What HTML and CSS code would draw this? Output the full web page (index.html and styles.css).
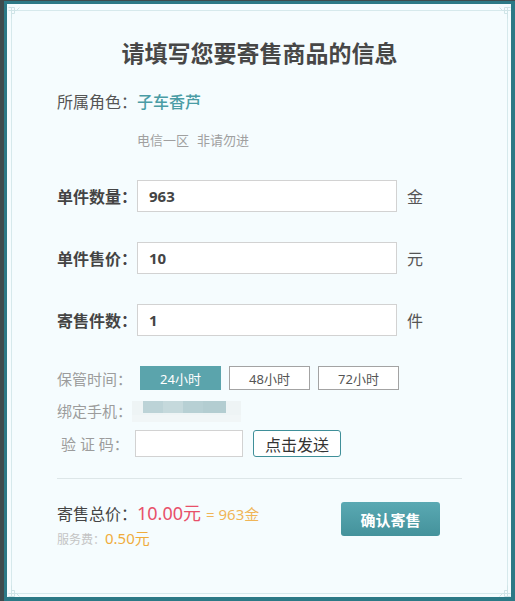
FILE: index.html
```html
<!DOCTYPE html>
<html>
<head>
  <meta charset="utf-8">
  <title>寄售商品</title>
  <link rel="stylesheet" href="styles.css">
</head>
<body>
  <div class="modal">
    <div class="frame">
      <svg class="corner corner-tl" width="12" height="12" viewBox="0 0 12 12"><path d="M11.5 0.5 L8.5 3.5 L0.5 3.5 M3.5 0.5 L3.5 11.5 M0.5 0.5 L6.5 0.5 L6.5 6.5 L3.5 6.5" fill="none" stroke="#cfe4e7"/></svg>
      <svg class="corner corner-tr" width="12" height="12" viewBox="0 0 12 12"><path d="M0.5 0.5 L3.5 3.5 L11.5 3.5 M8.5 0.5 L8.5 11.5 M11.5 0.5 L5.5 0.5 L5.5 6.5 L8.5 6.5" fill="none" stroke="#cfe4e7"/></svg>
      <svg class="corner corner-bl" width="12" height="12" viewBox="0 0 12 12"><path d="M11.5 11.5 L8.5 8.5 L0.5 8.5 M3.5 11.5 L3.5 0.5 M0.5 11.5 L6.5 11.5 L6.5 5.5 L3.5 5.5" fill="none" stroke="#cfe4e7"/></svg>
      <svg class="corner corner-br" width="12" height="12" viewBox="0 0 12 12"><path d="M0.5 11.5 L3.5 8.5 L11.5 8.5 M8.5 11.5 L8.5 0.5 M11.5 11.5 L5.5 11.5 L5.5 5.5 L8.5 5.5" fill="none" stroke="#cfe4e7"/></svg>

      <h2 class="title">请填写您要寄售商品的信息</h2>

      <div class="role-row">
        <span class="role-label">所属角色：</span>
        <span class="role-name">子车香芦</span>
      </div>
      <div class="server">电信一区<span class="server-note">非请勿进</span></div>

      <div class="field">
        <label class="field-label">单件数量：</label>
        <input class="field-input" type="text" value="963">
        <span class="unit">金</span>
      </div>
      <div class="field">
        <label class="field-label">单件售价：</label>
        <input class="field-input" type="text" value="10">
        <span class="unit">元</span>
      </div>
      <div class="field">
        <label class="field-label">寄售件数：</label>
        <input class="field-input" type="text" value="1">
        <span class="unit">件</span>
      </div>

      <div class="option-row time-row">
        <span class="sub-label">保管时间：</span>
        <div class="durations">
          <button class="dur active">24小时</button>
          <button class="dur">48小时</button>
          <button class="dur">72小时</button>
        </div>
      </div>
      <div class="option-row phone-row">
        <span class="sub-label">绑定手机：</span>
        <div class="masked"><div class="masked-core"></div></div>
      </div>
      <div class="option-row code-row">
        <span class="sub-label code-label">验 证 码：</span>
        <input class="code-input" type="text">
        <button class="send-btn">点击发送</button>
      </div>

      <hr class="divider">

      <div class="summary">
        <div class="totals">
          <div class="total-line">
            <span class="total-label">寄售总价：</span>
            <span class="total-price">10.00元</span>
            <span class="total-gold">= 963金</span>
          </div>
          <div class="fee-line">
            <span class="fee-label">服务费：</span>
            <span class="fee-value">0.50元</span>
          </div>
        </div>
        <button class="confirm-btn">确认寄售</button>
      </div>
    </div>
  </div>
</body>
</html>
```

FILE: styles.css
```css
body {
  margin: 0;
  background: #3f4b4d;
  font-family: "Noto Sans", "Noto Sans CJK SC", sans-serif;
  height: 601px;
  overflow: hidden;
}

.modal {
  box-sizing: border-box;
  width: 511px;
  height: 600px;
  margin: 1px 0 0 4px;
  border: 3px solid #2c7986;
  border-right-width: 4px;
  border-bottom-width: 4px;
  background: #f5fcfe;
  padding: 6px 3px 3px 4px;
}

.frame {
  position: relative;
  box-sizing: border-box;
  height: 584px;
  border: 1px solid #d6e9ec;
  padding: 27px 45px 0 45px;
}

/* decorative corners of the frame */
.corner {
  position: absolute;
}

.corner-tl { top: -4px; left: -4px; }
.corner-tr { top: -4px; right: -4px; }
.corner-bl { bottom: -4px; left: -4px; }
.corner-br { bottom: -4px; right: -4px; }

.title {
  margin: 0;
  font-size: 23px;
  line-height: 30px;
  font-weight: bold;
  color: #474747;
  text-align: center;
  margin-left: -45px;
  margin-right: -45px;
}

.role-row {
  margin-top: 22px;
  display: flex;
  font-size: 16px;
  line-height: 24px;
}

.role-label {
  width: 80px;
  color: #555;
}

.role-name {
  color: #4a9ca5;
  font-weight: 500;
}

.server {
  margin-top: 16px;
  padding-left: 80px;
  font-size: 13px;
  line-height: 20px;
  color: #a0a0a0;
}

.server-note {
  margin-left: 8px;
}

.field {
  display: flex;
  align-items: center;
  height: 32px;
  margin-top: 30px;
}

.field-label {
  width: 80px;
  font-size: 16px;
  font-weight: bold;
  color: #444;
}

.field-input {
  box-sizing: border-box;
  width: 260px;
  height: 32px;
  border: 1px solid #d2d2d2;
  background: #fff;
  padding: 0 11px;
  font-family: "Noto Sans", "Noto Sans CJK SC", sans-serif;
  font-size: 15px;
  font-weight: bold;
  color: #444;
  outline: none;
}

.unit {
  margin-left: 10px;
  font-size: 16px;
  color: #555;
}

.option-row {
  display: flex;
  align-items: center;
}

.sub-label {
  width: 75px;
  font-size: 15px;
  color: #9c9c9c;
}

.time-row {
  margin-top: 30px;
  height: 24px;
}

.durations {
  display: flex;
  gap: 8px;
  margin-left: 8px;
}

.dur {
  box-sizing: border-box;
  width: 81px;
  height: 24px;
  border: 1px solid #a3a3a3;
  background: #fff;
  padding: 0;
  font-family: "Noto Sans", "Noto Sans CJK SC", sans-serif;
  font-size: 13px;
  color: #555;
}

.dur.active {
  background: #5ba4ac;
  border-color: #5ba4ac;
  color: #fff;
}

.phone-row {
  margin-top: 8px;
  height: 24px;
}

.masked {
  width: 109px;
  height: 21px;
  background: linear-gradient(to bottom, #eef4f5 0 14px, #f1f6f7 14px);
  margin-top: 2px;
}

.masked-core {
  width: 83px;
  height: 12px;
  margin-left: 11px;
  background: linear-gradient(to right, #bcd3d7 0 20px, #c5d9dc 20px 40px, #b7d0d4 40px 60px, #b3cdd1 60px 83px);
}

.code-row {
  margin-top: 8px;
  height: 27px;
}

.code-label {
  box-sizing: border-box;
  width: 78px;
  padding-left: 4px;
}

.code-input {
  box-sizing: border-box;
  width: 108px;
  height: 27px;
  border: 1px solid #d2d2d2;
  background: #fff;
  outline: none;
}

.send-btn {
  box-sizing: border-box;
  width: 88px;
  height: 27px;
  margin-left: 10px;
  border: 1px solid #3f8f99;
  border-radius: 3px;
  background: #fff;
  padding: 0;
  font-family: "Noto Sans", "Noto Sans CJK SC", sans-serif;
  font-size: 16px;
  color: #333;
}

.divider {
  margin: 21px 0 0 0;
  border: none;
  border-top: 1px solid #dde6e8;
}

.summary {
  display: flex;
  justify-content: space-between;
  align-items: flex-start;
  margin-top: 22px;
}

.total-line {
  display: flex;
  align-items: baseline;
  line-height: 24px;
}

.total-label {
  width: 80px;
  font-size: 16px;
  color: #444;
}

.total-price {
  font-size: 18px;
  color: #e8506a;
}

.total-gold {
  margin-left: 5px;
  font-size: 15px;
  color: #f0b557;
}

.fee-line {
  display: flex;
  align-items: baseline;
  line-height: 20px;
  margin-top: 2px;
}

.fee-label {
  width: 48px;
  font-size: 12px;
  color: #c4c4c4;
}

.fee-value {
  font-size: 15px;
  color: #f0ac3c;
}

.confirm-btn {
  width: 99px;
  height: 34px;
  margin: 1px 22px 0 0;
  border: none;
  border-radius: 3px;
  background: linear-gradient(to bottom, #5aa9b3, #44929b);
  padding: 0;
  font-family: "Noto Sans", "Noto Sans CJK SC", sans-serif;
  font-size: 15px;
  font-weight: bold;
  color: #fff;
}
```
